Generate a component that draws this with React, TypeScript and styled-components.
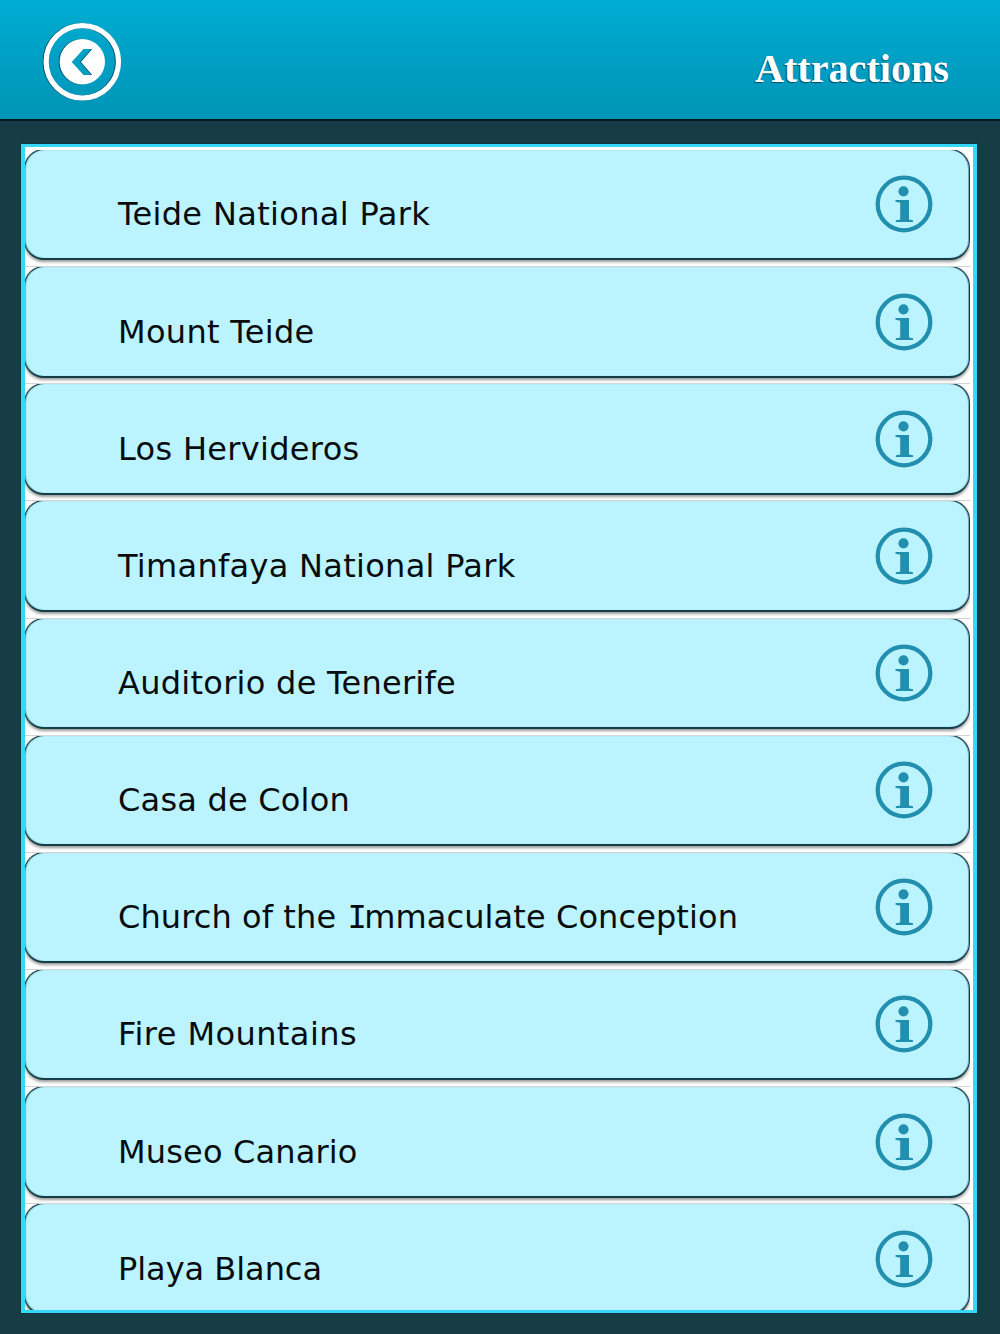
import React, { useLayoutEffect, useRef, useState } from "react";
import styled, { createGlobalStyle } from "styled-components";

const GlobalStyle = createGlobalStyle`
  *, *::before, *::after { box-sizing: border-box; }
  html, body { margin: 0; padding: 0; background: #163c46; }
`;

const Screen = styled.div`
  width: 1000px;
  height: 1334px;
  display: flex;
  flex-direction: column;
  overflow: hidden;
  background: #163c46;
`;

const Header = styled.header`
  flex: none;
  height: 121px;
  display: flex;
  justify-content: space-between;
  align-items: flex-start;
  padding: 20px 51px 0 40px;
  background: linear-gradient(#00acd2, #0094b6);
  border-bottom: 2px solid #06191f;
`;

const BackButton = styled.button`
  width: 84px;
  height: 84px;
  padding: 0;
  border: 0;
  background: none;
  svg { display: block; filter: drop-shadow(-0.4px 0.8px 0.6px rgba(0, 45, 60, 0.65)); }
`;

const Title = styled.h1`
  margin: 25px 0 0;
  font: bold 40px/48px "Liberation Serif", serif;
  color: #fff;
  text-shadow: -1px 1px 1px rgba(0, 50, 65, 0.7);
  white-space: nowrap;
`;

const Panel = styled.main`
  margin: 23px 23px 21px 21px;
  flex: 1;
  min-height: 0;
  border: 3px solid #35d8fa;
  border-left-width: 4px;
  border-right-width: 4px;
  outline: 1px solid #12343d;
  background: #fff;
  overflow: hidden;
`;

const List = styled.ul`
  margin: 0;
  padding: 3px 3px 0 0;
  list-style: none;
`;

const Row = styled.li`
  height: 117.15px;
  overflow: hidden;
  border-bottom: 1px solid #d2d5d6;
`;

const Card = styled.div`
  height: 111.4px;
  margin: -1px 0 0 -1px;
  display: flex;
  align-items: flex-start;
  justify-content: space-between;
  padding: 0 36px 0 93px;
  border: 1px solid #143f49;
  border-bottom-width: 2px;
  border-radius: 20px;
  background: #bbf4ff;
  box-shadow: 0 1.5px 3px rgba(0, 0, 0, 0.4), inset 1px 0 1px rgba(20, 63, 73, 0.35),
    inset -1px 0 0 rgba(20, 63, 73, 0.4);
`;

const Label = styled.span`
  margin-top: 44.4px;
  font: 32px/40px "DejaVu Sans", Verdana, sans-serif;
  color: #080c0e;
  white-space: pre;
`;

const SerifCapital = styled.span`
  font-family: "DejaVu Sans Mono", monospace;
  margin: 0 -2.5px 0 1px;
`;

const InfoSvg = styled.svg`
  display: block;
  flex: none;
  margin-top: 25.4px;
`;

function InfoIcon() {
  return (
    <InfoSvg width="58" height="58" viewBox="0 0 58 58">
      <circle cx="29" cy="29" r="26.3" fill="none" stroke="#238faf" strokeWidth="4.3" />
      <circle cx="28.5" cy="16.3" r="5.1" fill="#238faf" />
      <path d="M20.5 25H34V44.5L38 45.2V46.9H20.8V45.2L25.2 44.5V27.7L20.5 26.7Z" fill="#238faf" />
    </InfoSvg>
  );
}

/* Tracks each line of text so that it spans a known width. */
function FitText({ width, as: Tag, children }: { width: number; as: React.ElementType; children: React.ReactNode }) {
  const ref = useRef<HTMLElement>(null);
  const [spacing, setSpacing] = useState(0);
  useLayoutEffect(() => {
    const el = ref.current;
    if (!el) return;
    const count = (el.textContent ?? "").length;
    setSpacing((width - el.getBoundingClientRect().width) / count);
  }, [width]);
  return <Tag ref={ref} style={{ letterSpacing: spacing }}>{children}</Tag>;
}

const attractions: { name: string; width: number }[] = [
  { name: "Teide National Park", width: 312 },
  { name: "Mount Teide", width: 196.5 },
  { name: "Los Hervideros", width: 241.5 },
  { name: "Timanfaya National Park", width: 397.5 },
  { name: "Auditorio de Tenerife", width: 338 },
  { name: "Casa de Colon", width: 232 },
  { name: "Church of the Immaculate Conception", width: 620 },
  { name: "Fire Mountains", width: 239 },
  { name: "Museo Canario", width: 239.5 },
  { name: "Playa Blanca", width: 204 },
];

function renderName(name: string) {
  return name.split(/(I)/).map((part, i) =>
    part === "I" ? <SerifCapital key={i}>I</SerifCapital> : part
  );
}

export default function App() {
  return (
    <Screen>
      <GlobalStyle />
      <Header>
        <BackButton aria-label="Back">
          <svg width="84" height="84" viewBox="0 0 84 84">
            <circle cx="42.3" cy="41.8" r="36.2" fill="none" stroke="#fff" strokeWidth="5.2" />
            <path
              fill="#fff"
              fillRule="evenodd"
              d="M42.3 19a22.7 22.7 0 1 0 0 45.4a22.7 22.7 0 1 0 0-45.4ZM43.6 29H52.2L41 42L52.2 55H43.6L31.7 42Z"
            />
          </svg>
        </BackButton>
        <FitText as={Title} width={194}>Attractions</FitText>
      </Header>
      <Panel>
        <List>
          {attractions.map((a) => (
            <Row key={a.name}>
              <Card>
                <FitText as={Label} width={a.width}>{renderName(a.name)}</FitText>
                <InfoIcon />
              </Card>
            </Row>
          ))}
        </List>
      </Panel>
    </Screen>
  );
}
